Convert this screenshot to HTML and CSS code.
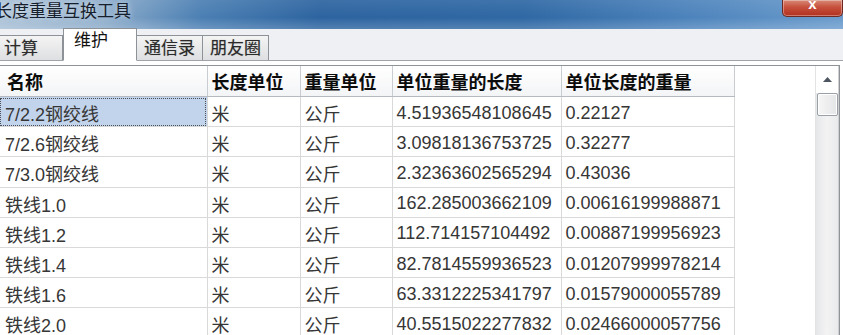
FILE: index.html
```html
<!DOCTYPE html>
<html lang="zh-CN">
<head>
    <meta charset="UTF-8">
    <title>长度重量互换工具</title>
    <link rel="stylesheet" href="styles.css">
</head>
<body>
    <div class="window">
        <div class="titlebar">
            <span class="title">长度重量互换工具</span>
            <div class="close">x</div>
        </div>
        <div class="frame">
            <div class="tabs">
                <div class="tab first">计算</div>
                <div class="tab active">维护</div>
                <div class="tab">通信录</div>
                <div class="tab">朋友圈</div>
            </div>
            <div class="page">
                <div class="list">
                    <div class="grid">
                        <table>
                            <colgroup>
                                <col class="c-name">
                                <col class="c-unit">
                                <col class="c-unit2">
                                <col class="c-len">
                                <col class="c-wt">
                            </colgroup>
                            <thead>
                                <tr>
                                    <th>名称</th>
                                    <th>长度单位</th>
                                    <th>重量单位</th>
                                    <th>单位重量的长度</th>
                                    <th>单位长度的重量</th>
                                </tr>
                            </thead>
                            <tbody>
                                <tr><td class="selected">7/2.2钢绞线</td><td>米</td><td>公斤</td><td>4.51936548108645</td><td>0.22127</td></tr>
                                <tr><td>7/2.6钢绞线</td><td>米</td><td>公斤</td><td>3.09818136753725</td><td>0.32277</td></tr>
                                <tr><td>7/3.0钢绞线</td><td>米</td><td>公斤</td><td>2.32363602565294</td><td>0.43036</td></tr>
                                <tr><td>铁线1.0</td><td>米</td><td>公斤</td><td>162.285003662109</td><td>0.00616199988871</td></tr>
                                <tr><td>铁线1.2</td><td>米</td><td>公斤</td><td>112.714157104492</td><td>0.00887199956923</td></tr>
                                <tr><td>铁线1.4</td><td>米</td><td>公斤</td><td>82.7814559936523</td><td>0.01207999978214</td></tr>
                                <tr><td>铁线1.6</td><td>米</td><td>公斤</td><td>63.3312225341797</td><td>0.01579000055789</td></tr>
                                <tr><td>铁线2.0</td><td>米</td><td>公斤</td><td>40.5515022277832</td><td>0.02466000057756</td></tr>
                                <tr><td>铁线2.5</td><td>米</td><td>公斤</td><td>25.9529628753662</td><td>0.03853000029921</td></tr>
                            </tbody>
                        </table>
                    </div>
                    <div class="scrollbar">
                        <div class="arrow">
                            <svg width="9" height="5" viewBox="0 0 9 5"><path d="M0 5 L4.5 0 L9 5 Z" fill="#4d5560"/></svg>
                        </div>
                        <div class="thumb"></div>
                        <div class="track"></div>
                    </div>
                </div>
            </div>
        </div>
    </div>
</body>
</html>
```

FILE: styles.css
```css
html, body {
    margin: 0;
    height: 100%;
    overflow: hidden;
}
body {
    font-family: "Liberation Sans", "Noto Sans CJK SC", sans-serif;
    background: #eef0f3;
}
.window {
    width: 843px;
    height: 335px;
    display: flex;
    flex-direction: column;
    overflow: hidden;
}
.titlebar {
    height: 29px;
    flex: none;
    display: flex;
    align-items: flex-start;
    background:
        linear-gradient(to bottom, rgba(255,255,255,0.08), rgba(255,255,255,0) 60%, rgba(255,255,255,0.18)),
        linear-gradient(to right, #a9c0d6 0, #8eadcb 12%, #4b7fb3 24%, #2d64a0 38%, #2f68a4 62%, #4a81ba 80%, #6b9ccd 100%);
}
.title {
    margin-left: -5px;
    margin-top: 2px;
    font-size: 17px;
    line-height: 20px;
    color: #16202c;
    text-shadow: 0 0 6px rgba(255,255,255,0.7);
}
.close {
    margin-left: auto;
    width: 59px;
    height: 16px;
    border: 1px solid #6e2a22;
    border-top: none;
    border-radius: 0 0 5px 5px;
    background: linear-gradient(to bottom, #d88a78 0, #c7503d 45%, #b1301f 100%);
    box-shadow: inset 0 0 0 1px rgba(255,255,255,0.35);
    color: #fff;
    font-weight: bold;
    font-size: 15px;
    line-height: 8px;
    text-align: center;
    overflow: hidden;
}
.frame {
    flex: 1;
    display: flex;
    flex-direction: column;
    background: #eef0f3;
}
.tabs {
    height: 31px;
    flex: none;
    display: flex;
    align-items: flex-end;
    border-bottom: 1px solid #a0a4aa;
}
.tab {
    width: 65px;
    height: 24px;
    margin-bottom: -1px;
    border: 1px solid #8d9299;
    border-left: none;
    border-bottom: 1px solid #a0a4aa;
    background: linear-gradient(to bottom, #f4f4f4, #dedfe1);
    font-size: 17px;
    line-height: 25px;
    text-align: center;
    color: #2a2a2a;
    text-shadow: 0 0 1px rgba(0,0,0,0.35);
}
.tab.first {
    width: 58px;
    padding-left: 4px;
    text-align: left;
}
.tab.active {
    height: 31px;
    width: 62px;
    padding-left: 10px;
    border-left: 1px solid #8d9299;
    border-bottom-color: #fff;
    background: #fff;
    line-height: 24px;
    text-align: left;
    text-shadow: none;
    color: #111;
}
.page {
    flex: 1;
    background: #fff;
    padding-top: 4px;
    display: flex;
    flex-direction: column;
    min-height: 0;
}
.list {
    flex: 1;
    display: flex;
    border-top: 1px solid #8e939a;
    border-right: 1px solid #8e939a;
    margin-right: 3px;
    margin-left: -1px;
    background: #fff;
    min-height: 0;
}
.grid {
    flex: 1;
    overflow: hidden;
}
table {
    border-collapse: collapse;
    table-layout: fixed;
    width: 735px;
    font-size: 18px;
}
.c-name { width: 208px; }
.c-unit { width: 93px; }
.c-unit2 { width: 92px; }
.c-len { width: 169px; }
.c-wt { width: 173px; }
th {
    height: 30px;
    padding: 0 0 0 8px;
    text-align: left;
    font-weight: bold;
    color: #0c0c0c;
    background: linear-gradient(to bottom, #ffffff, #f3f4f6);
    border-right: 1px solid #c9ccd1;
    border-bottom: 1px solid #b7bbc1;
    white-space: nowrap;
    overflow: hidden;
}
th + th {
    padding-left: 4px;
}
td {
    box-sizing: border-box;
    height: 30.2px;
    padding: 3px 0 0 4px;
    border-right: 1px solid #d9d9d9;
    border-bottom: 1px solid #d9d9d9;
    color: #363636;
    white-space: nowrap;
    overflow: hidden;
}
td:first-child {
    padding-left: 6px;
}
td.selected {
    background: #c2d4ec;
    outline: 1px dotted #4a4f57;
    outline-offset: -2px;
}
.scrollbar {
    width: 22px;
    flex: none;
    display: flex;
    flex-direction: column;
    align-items: center;
    border-left: 1px solid #e3e3e3;
    border-right: 1px solid #d0d0d0;
    background: linear-gradient(to right, #e6e7e9, #f3f3f4 50%, #e9eaeb);
}
.arrow {
    height: 27px;
    width: 100%;
    display: flex;
    align-items: center;
    justify-content: center;
    background: #fff;
}
.thumb {
    width: 19px;
    height: 21px;
    border: 1px solid #9aa0a8;
    border-radius: 2px;
    background: linear-gradient(to right, #f6f6f6, #e4e5e7);
    box-shadow: inset 0 0 0 1px #fff;
}
.track {
    flex: 1;
}
```
